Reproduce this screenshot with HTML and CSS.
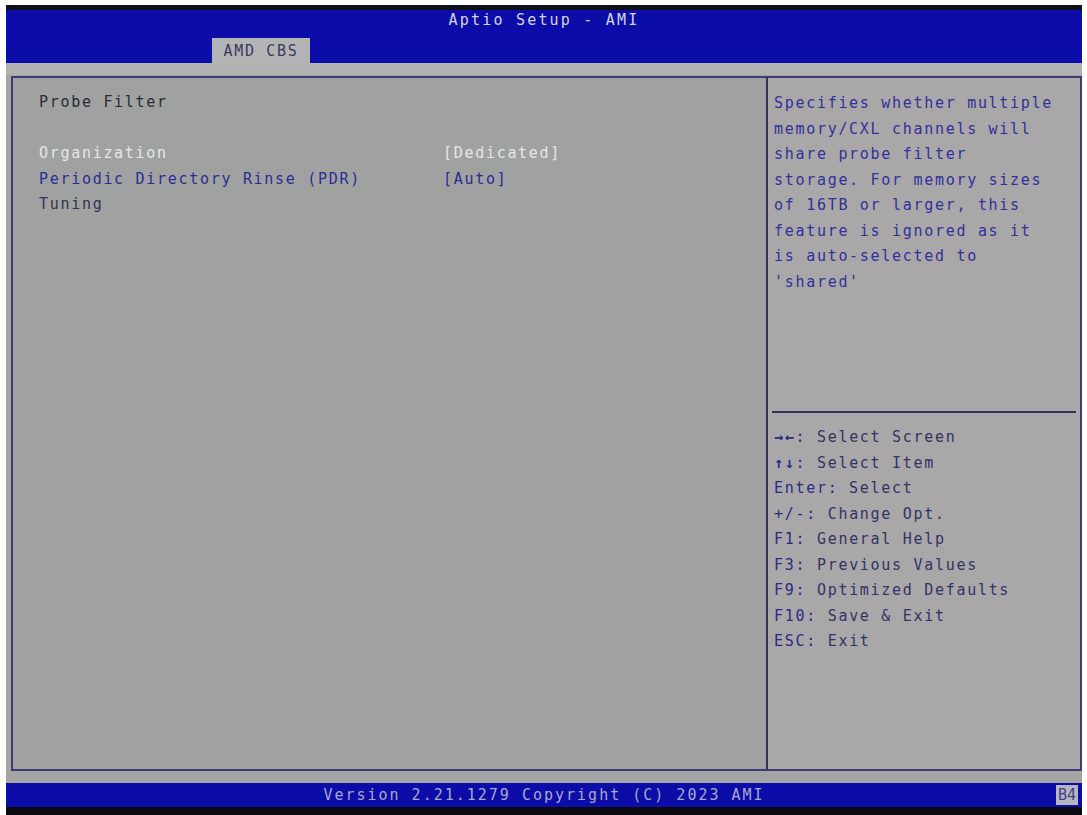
FILE: index.html
```html
<!DOCTYPE html>
<html lang="en">
<head>
    <meta charset="UTF-8">
    <title>Aptio Setup - AMI</title>
    <link rel="stylesheet" href="styles.css">
</head>
<body>
    <div class="screen">
        <div class="edge-top"></div>

        <header class="titlebar">
            <div class="title">Aptio Setup - AMI</div>
            <nav class="tabs">
                <span class="tab">AMD CBS</span>
            </nav>
        </header>

        <main class="workspace">
            <div class="frame">
                <!-- Setup items -->
                <section class="settings">
                    <div class="row heading">Probe Filter</div>
                    <div class="row"></div>
                    <div class="row selected">
                        <span class="label">Organization</span>
                        <span class="value">[Dedicated]</span>
                    </div>
                    <div class="row option">
                        <span class="label">Periodic Directory Rinse (PDR)</span>
                        <span class="value">[Auto]</span>
                    </div>
                    <div class="row option">
                        <span class="label sub">Tuning</span>
                    </div>
                </section>

                <!-- Help + key legend -->
                <aside class="sidebar">
                    <div class="help">
                        <span>Specifies whether multiple</span>
                        <span>memory/CXL channels will</span>
                        <span>share probe filter</span>
                        <span>storage. For memory sizes</span>
                        <span>of 16TB or larger, this</span>
                        <span>feature is ignored as it</span>
                        <span>is auto-selected to</span>
                        <span>'shared'</span>
                    </div>
                    <div class="divider"></div>
                    <ul class="keys">
                        <li><b class="arrows">&rarr;&larr;</b><b>:</b> Select Screen</li>
                        <li><b class="arrows">&uarr;&darr;</b><b>:</b> Select Item</li>
                        <li><b>Enter:</b> Select</li>
                        <li><b>+/-:</b> Change Opt.</li>
                        <li><b>F1:</b> General Help</li>
                        <li><b>F3:</b> Previous Values</li>
                        <li><b>F9:</b> Optimized Defaults</li>
                        <li><b>F10:</b> Save &amp; Exit</li>
                        <li><b>ESC:</b> Exit</li>
                    </ul>
                </aside>
            </div>
        </main>

        <footer class="statusbar">
            <span></span>
            <span class="version">Version 2.21.1279 Copyright (C) 2023 AMI</span>
            <span class="badge">B4</span>
        </footer>

        <div class="edge-bottom"></div>
    </div>
</body>
</html>
```

FILE: styles.css
```css
body {
    margin: 0;
    padding: 0;
    background: #ffffff;
    font-family: "DejaVu Sans Mono", "Liberation Mono", monospace;
    font-size: 15px;
    letter-spacing: 1.7px;
}

.screen {
    display: flex;
    flex-direction: column;
    width: 1076px;
    height: 810px;
    margin: 5px 0 0 6px;
    background: #a0a2a2;
}

.edge-top {
    height: 5px;
    background: #101018;
}

.edge-bottom {
    height: 8px;
    background: #0a0a10;
}

/* title bar */
.titlebar {
    display: flex;
    flex-direction: column;
    height: 53px;
    background: #0c0ca8;
}

.title {
    height: 28px;
    line-height: 20px;
    text-align: center;
    letter-spacing: 2.2px;
    color: #d4d4e0;
}

.tabs {
    display: flex;
    height: 25px;
    padding-left: 206px;
}

.tab {
    width: 98px;
    line-height: 27px;
    text-align: center;
    background: #b2b4b6;
    color: #3a3a5a;
}

/* main area */
.workspace {
    flex: 1;
    padding: 13px 0 12px 5px;
    background: linear-gradient(#b0b2b2 0, #b0b2b2 12px, #a3a5a5 12px);
}

.frame {
    display: flex;
    height: 100%;
    box-sizing: border-box;
    border: 2px solid #3c3c74;
    background: #9fa2a1;
}

.settings {
    width: 755px;
    padding: 12px 0 0 26px;
    box-sizing: border-box;
    border-right: 2px solid #34345c;
}

.row {
    display: grid;
    grid-template-columns: 404px 1fr;
    height: 25.5px;
    line-height: 25.5px;
    white-space: nowrap;
}

.heading {
    color: #2a2a36;
}

.selected {
    color: #e6e6e8;
}

.option {
    color: #2c2c92;
}

.label.sub {
    color: #343452;
}

.sidebar {
    flex: 1;
    display: flex;
    flex-direction: column;
    background: #a9a7a8;
}

.help {
    display: flex;
    flex-direction: column;
    height: 333px;
    box-sizing: border-box;
    padding: 13px 0 0 6px;
    color: #31319a;
    line-height: 25.5px;
    white-space: nowrap;
}

.divider {
    height: 2px;
    margin: 0 4px;
    background: #32325a;
}

.keys {
    list-style: none;
    margin: 0;
    padding: 12px 0 0 6px;
    line-height: 25.5px;
    color: #333366;
    white-space: nowrap;
}

.keys b {
    font-weight: normal;
    color: #2a2a86;
}

.keys b.arrows {
    font-weight: bold;
}

/* status bar */
.statusbar {
    display: grid;
    grid-template-columns: 1fr auto 1fr;
    align-items: center;
    height: 24px;
    background: #0c0ca8;
}

.version {
    letter-spacing: 2px;
    color: #a8a8cc;
}

.badge {
    justify-self: end;
    width: 22px;
    height: 20px;
    margin-right: 4px;
    line-height: 20px;
    text-align: center;
    letter-spacing: 0;
    background: #b6b6c0;
    color: #40408a;
}
```
